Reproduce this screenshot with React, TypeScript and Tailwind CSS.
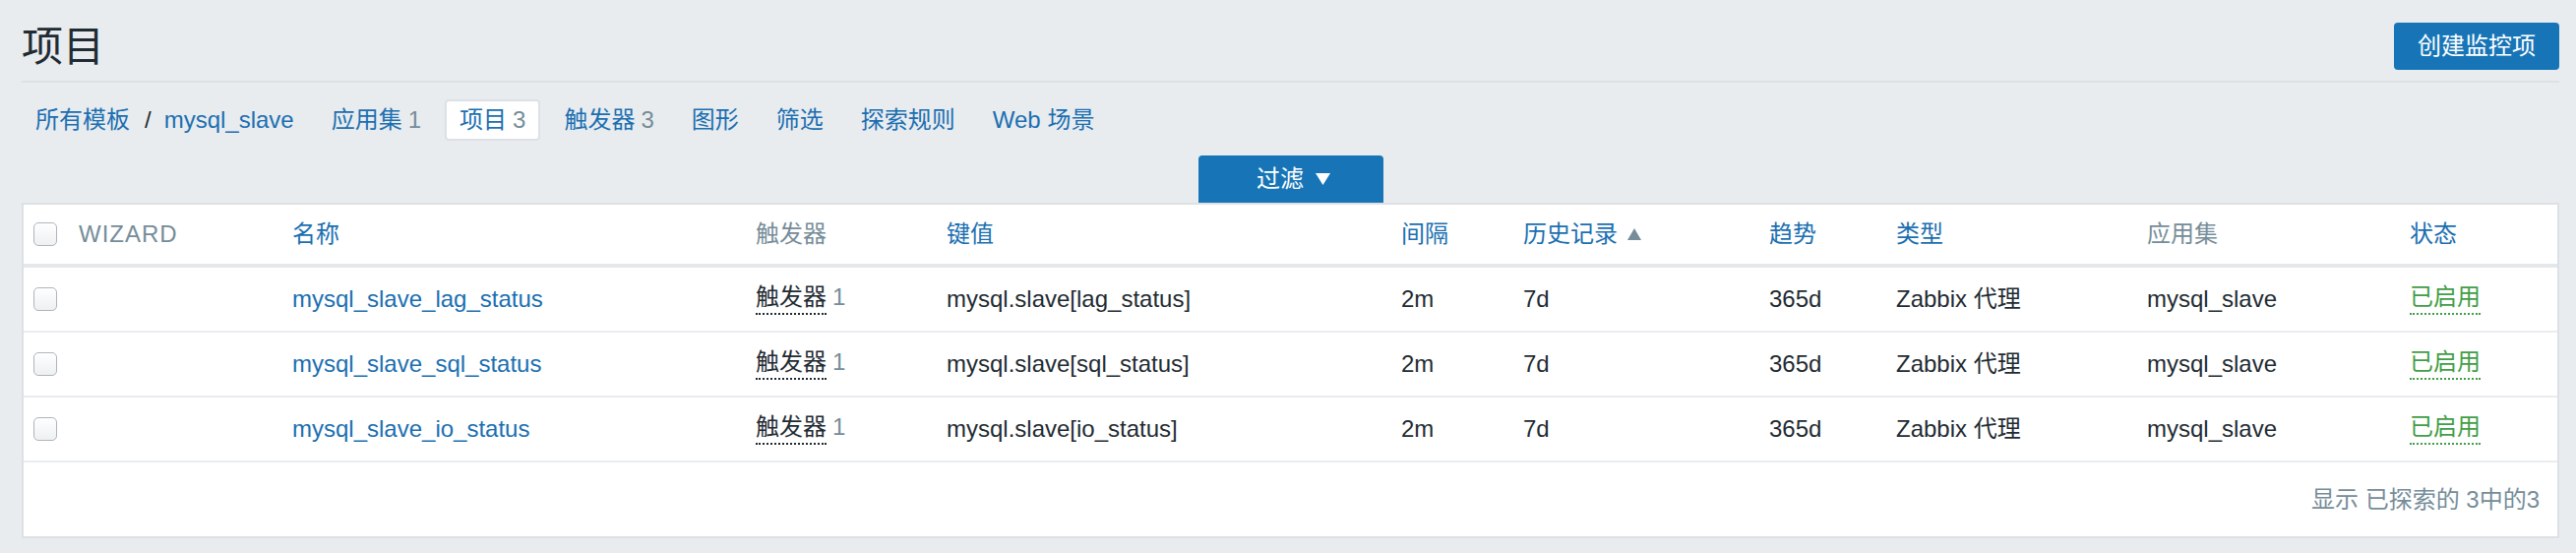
import React from "react";

type Item = {
  name: string;
  key: string;
};

const items: Item[] = [
  { name: "mysql_slave_lag_status", key: "mysql.slave[lag_status]" },
  { name: "mysql_slave_sql_status", key: "mysql.slave[sql_status]" },
  { name: "mysql_slave_io_status", key: "mysql.slave[io_status]" },
];

const cols =
  "grid grid-cols-[46px_217px_471px_194px_462px_124px_250px_129px_255px_267px_1fr] items-center";

const Checkbox = () => (
  <span className="block w-[24px] h-[24px] rounded-[5px] border border-[#aeb6bc] bg-gradient-to-b from-white to-[#eef0f1]" />
);

const NavItem = ({
  label,
  count,
  active,
}: {
  label: string;
  count?: number;
  active?: boolean;
}) => (
  <div
    className={
      active
        ? "h-[42px] flex items-center px-[13px] bg-white border-2 border-[#dde1e5] rounded-[4px]"
        : "h-[42px] flex items-center px-[14px]"
    }
  >
    <span className="text-[#1b6fb1]">{label}</span>
    {count !== undefined && <span className="text-[#768d99] ml-[6px]">{count}</span>}
  </div>
);

const App = () => {
  return (
    <div
      className="min-h-[562px] bg-[#e9ecef] pl-[22px] pr-[17px] text-[24px] leading-[28px] text-[#1f2c33]"
      style={{ fontFamily: '"Liberation Sans", "Noto Sans CJK SC", sans-serif' }}
    >
      {/* header */}
      <div className="flex items-center justify-between pt-[22px] pb-[10px] border-b-2 border-[#dde1e5]">
        <h1 className="text-[42px] leading-[48px] text-[#1f2c33] mt-[2px]">项目</h1>
        <button className="w-[168px] h-[48px] rounded-[4px] bg-[#1775b7] text-white text-[24px]">
          创建监控项
        </button>
      </div>

      {/* tabs */}
      <div className="flex items-center gap-[10px] mt-[17px]">
        <div className="h-[42px] flex items-center px-[14px]">
          <span className="text-[#1b6fb1]">所有模板</span>
          <span className="ml-[15px] mr-[13px]">/</span>
          <span className="text-[#1b6fb1]">mysql_slave</span>
        </div>
        <NavItem label="应用集" count={1} />
        <NavItem label="项目" count={3} active />
        <NavItem label="触发器" count={3} />
        <NavItem label="图形" />
        <NavItem label="筛选" />
        <NavItem label="探索规则" />
        <NavItem label="Web 场景" />
      </div>

      {/* filter tab */}
      <div className="flex justify-center mt-[15px]">
        <button className="w-[188px] h-[48px] rounded-t-[4px] bg-[#1775b7] text-white flex items-center justify-center gap-[12px] pl-[6px]">
          <span>过滤</span>
          <svg width="15" height="12" viewBox="0 0 15 12">
            <path d="M0 0 L15 0 L7.5 12 Z" fill="#fff" />
          </svg>
        </button>
      </div>

      {/* table */}
      <div className="bg-white border-2 border-[#dde1e5]">
        <div className={`${cols} h-[64px] border-b-4 border-[#e4e8eb] [&>div]:px-[10px]`}>
          <div>
            <Checkbox />
          </div>
          <div className="text-[#768d99] tracking-[1px]">WIZARD</div>
          <div className="text-[#1b6fb1]">名称</div>
          <div className="text-[#768d99]">触发器</div>
          <div className="text-[#1b6fb1]">键值</div>
          <div className="text-[#1b6fb1]">间隔</div>
          <div className="flex items-center">
            <span className="text-[#1b6fb1]">历史记录</span>
            <svg className="ml-[10px]" width="14" height="12" viewBox="0 0 14 12">
              <path d="M7 0 L14 12 L0 12 Z" fill="#768d99" />
            </svg>
          </div>
          <div className="text-[#1b6fb1]">趋势</div>
          <div className="text-[#1b6fb1]">类型</div>
          <div className="text-[#768d99]">应用集</div>
          <div className="text-[#1b6fb1]">状态</div>
        </div>

        {items.map((it) => (
          <div
            key={it.name}
            className={`${cols} h-[66px] border-b-2 border-[#e9ecef] [&>div]:px-[10px]`}
          >
            <div>
              <Checkbox />
            </div>
            <div />
            <div className="text-[#1b6fb1]">{it.name}</div>
            <div>
              <span className="inline-block pb-[2px] border-b-2 border-dotted border-[#1f2c33]">触发器</span>
              <span className="text-[#768d99] ml-[6px]">1</span>
            </div>
            <div>{it.key}</div>
            <div>2m</div>
            <div>7d</div>
            <div>365d</div>
            <div>Zabbix 代理</div>
            <div>mysql_slave</div>
            <div>
              <span className="inline-block pb-[2px] text-[#429e47] border-b-2 border-dotted border-[#429e47]">
                已启用
              </span>
            </div>
          </div>
        ))}

        <div className="h-[75px] flex items-center justify-end pr-[18px] text-[#768d99]">
          显示 已探索的 3中的3
        </div>
      </div>
    </div>
  );
};

export default App;
